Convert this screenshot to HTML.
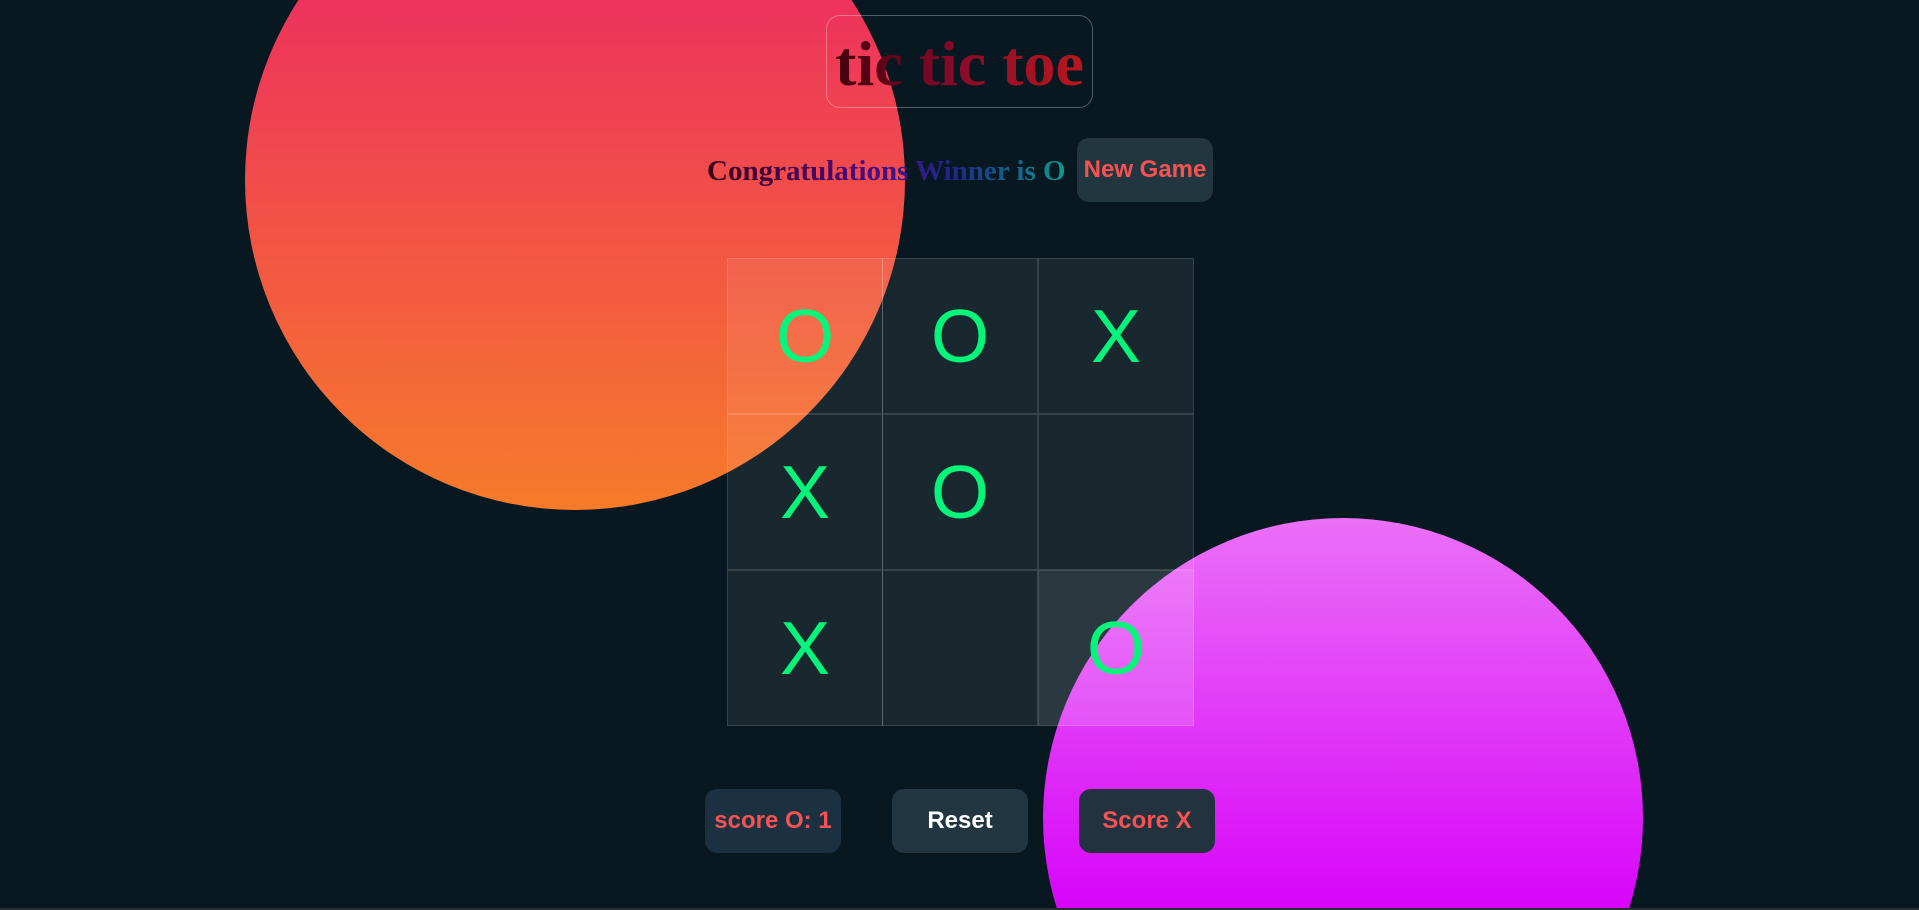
<!DOCTYPE html>
<html><head><meta charset="utf-8"><style>
html,body{margin:0;padding:0;width:1919px;height:910px;overflow:hidden;background:#081820;}
#wrap{position:relative;width:1919px;height:908px;overflow:hidden;background:#081820;}
#line{position:absolute;left:0;top:908px;width:1919px;height:2px;background:#2a2d30;}
.c{position:absolute;border-radius:50%;}
#c1{left:245px;top:-150px;width:660px;height:660px;background:linear-gradient(#eb1d6b,#f77b2a);}
#c2{position:absolute;left:1043px;top:518px;}
#title{position:absolute;left:826px;top:15px;width:267px;height:93px;border:1px solid rgba(255,255,255,0.3);border-radius:14px;box-sizing:border-box;text-align:center;}
#title span{font:bold 64px "Liberation Serif",serif;line-height:95px;background:linear-gradient(90deg,#45000f,#8a0a2a,#b8181e);-webkit-background-clip:text;background-clip:text;color:transparent;}
#cg{position:absolute;left:707px;top:155px;font:bold 29px "Liberation Serif",serif;white-space:nowrap;background:linear-gradient(90deg,#3a0018,#4a0a85 45%,#1c2a8a 70%,#0a9a90);-webkit-background-clip:text;background-clip:text;color:transparent;}
.btn{position:absolute;border-radius:12px;font:bold 24px "Liberation Sans",sans-serif;color:#f55353;text-align:center;line-height:64px;height:64px;}
#grid{position:absolute;left:727px;top:258px;width:466px;height:467px;}
.cell{position:absolute;width:156px;height:156px;box-sizing:border-box;border:1px solid rgba(255,255,255,0.13);background:rgba(255,255,255,0.07);font:75px "Liberation Sans",sans-serif;color:#05f57a;text-align:center;line-height:155px;}
</style></head><body>
<div id="wrap">
<div class="c" id="c1"></div>
<svg id="c2" width="600" height="390" viewBox="0 0 600 390"><defs><linearGradient id="g2" x1="0" y1="0" x2="0" y2="390" gradientUnits="userSpaceOnUse"><stop offset="0" stop-color="#eb70f7"/><stop offset="1" stop-color="#d805f9"/></linearGradient></defs><circle cx="300" cy="300" r="300" fill="url(#g2)"/></svg>
<div id="title"><span>tic tic toe</span></div>
<div id="cg">Congratulations Winner is O</div>
<div class="btn" style="left:1077px;top:138px;width:136px;background:#223640;">New Game</div>
<div id="grid">
<div class="cell" style="left:0;top:0">O</div>
<div class="cell" style="left:155px;top:0">O</div>
<div class="cell" style="left:311px;top:0">X</div>
<div class="cell" style="left:0;top:156px">X</div>
<div class="cell" style="left:155px;top:156px">O</div>
<div class="cell" style="left:311px;top:156px"></div>
<div class="cell" style="left:0;top:312px">X</div>
<div class="cell" style="left:155px;top:312px"></div>
<div class="cell" style="left:311px;top:312px;background:rgba(255,255,255,0.14)">O</div>
</div>
<div class="btn" style="left:705px;top:789px;width:136px;background:#1b3040;">score O: 1</div>
<div class="btn" style="left:892px;top:789px;width:136px;background:#223642;color:#fff;">Reset</div>
<div class="btn" style="left:1079px;top:789px;width:136px;background:#22333f;">Score X</div>
</div>
<div id="line"></div>
</body></html>
